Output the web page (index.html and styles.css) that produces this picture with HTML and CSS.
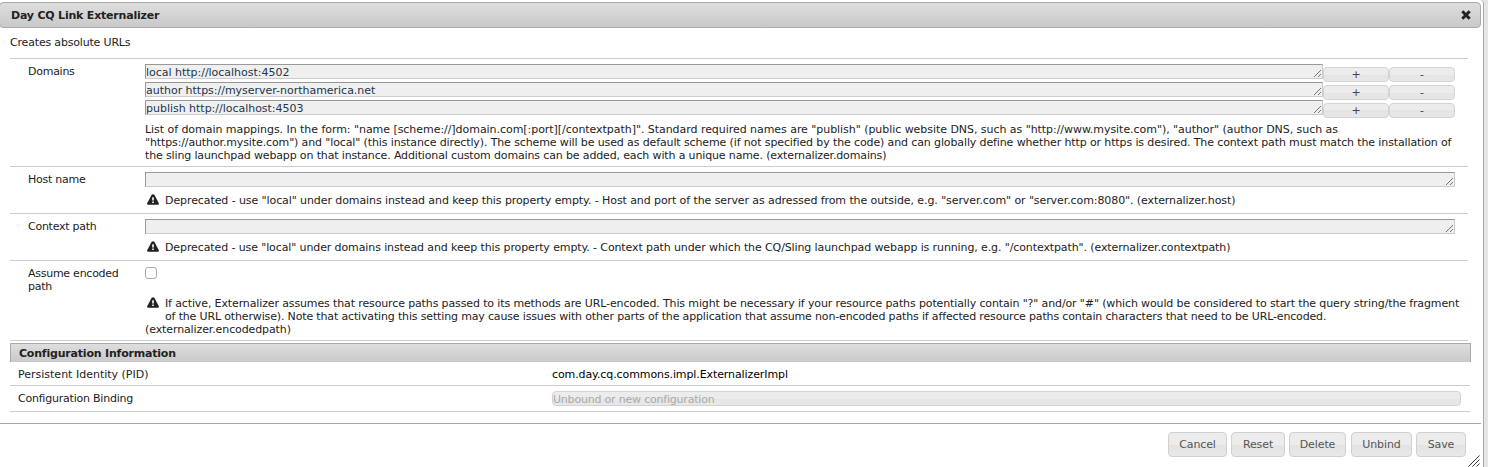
FILE: index.html
```html
<!DOCTYPE html>
<html lang="en">
<head>
<meta charset="utf-8">
<title>Day CQ Link Externalizer</title>
<link rel="stylesheet" href="styles.css">
</head>
<body>
<svg class="defs" width="0" height="0">
  <symbol id="grip" viewBox="0 0 7 7"><path d="M0 7L7 0M4 7L7 4" fill="none" stroke="#555" stroke-width=".8"/></symbol>
  <symbol id="warn" viewBox="0 0 12 11"><path d="M4.5.9Q6 -.6 7.5.9L11.8 9.2Q12.2 10.7 11 10.7H1Q-.2 10.7.2 9.2Z" fill="#222"/><path d="M5.2 3.2h1.6v3.4H5.2zM5.2 7.6h1.6v1.4H5.2z" fill="#fff"/></symbol>
</svg>
<main class="dialog">
  <header class="titlebar">
    <span class="title">Day CQ Link Externalizer</span>
    <svg class="close" width="10" height="10" viewBox="0 0 10 10"><path d="M1.3 1.3L8.7 8.7M8.7 1.3L1.3 8.7" stroke="#222" stroke-width="3" fill="none"/></svg>
  </header>
  <section class="content">
    <p class="intro">Creates absolute URLs</p>
    <div class="row domains">
      <div class="label">Domains</div>
      <div class="value">
        <div class="entry"><div class="field"><span>local http://localhost:4502</span><svg class="grip"><use href="#grip"/></svg></div><button class="mini">+</button><button class="mini">-</button></div>
        <div class="entry"><div class="field"><span>author https://myserver-northamerica.net</span><svg class="grip"><use href="#grip"/></svg></div><button class="mini">+</button><button class="mini">-</button></div>
        <div class="entry"><div class="field"><span>publish http://localhost:4503</span><svg class="grip"><use href="#grip"/></svg></div><button class="mini">+</button><button class="mini">-</button></div>
        <div class="help">
          <span class="line d1">List of domain mappings. In the form: "name [scheme://]domain.com[:port][/contextpath]". Standard required names are "publish" (public website DNS, such as "http://www.mysite.com"), "author" (author DNS, such as</span>
          <span class="line d2">"https://author.mysite.com") and "local" (this instance directly). The scheme will be used as default scheme (if not specified by the code) and can globally define whether http or https is desired. The context path must match the installation of</span>
          <span class="line d3">the sling launchpad webapp on that instance. Additional custom domains can be added, each with a unique name. (externalizer.domains)</span>
        </div>
      </div>
    </div>
    <div class="row single">
      <div class="label">Host name</div>
      <div class="value">
        <div class="field wide"><svg class="grip"><use href="#grip"/></svg></div>
        <div class="note"><svg class="warn"><use href="#warn"/></svg><span class="line h1">Deprecated - use "local" under domains instead and keep this property empty. - Host and port of the server as adressed from the outside, e.g. "server.com" or "server.com:8080". (externalizer.host)</span></div>
      </div>
    </div>
    <div class="row single">
      <div class="label">Context path</div>
      <div class="value">
        <div class="field wide"><svg class="grip"><use href="#grip"/></svg></div>
        <div class="note"><svg class="warn"><use href="#warn"/></svg><span class="line c1">Deprecated - use "local" under domains instead and keep this property empty. - Context path under which the CQ/Sling launchpad webapp is running, e.g. "/contextpath". (externalizer.contextpath)</span></div>
      </div>
    </div>
    <div class="row encoded">
      <div class="label">Assume encoded path</div>
      <div class="value">
        <span class="check"></span>
        <div class="note"><svg class="warn"><use href="#warn"/></svg><div><span class="line e1">If active, Externalizer assumes that resource paths passed to its methods are URL-encoded. This might be necessary if your resource paths potentially contain "?" and/or "#" (which would be considered to start the query string/the fragment</span><span class="line e2">of the URL otherwise). Note that activating this setting may cause issues with other parts of the application that assume non-encoded paths if affected resource paths contain characters that need to be URL-encoded.</span></div></div>
        <span class="line e3">(externalizer.encodedpath)</span>
      </div>
    </div>
    <h2 class="section">Configuration Information</h2>
    <div class="info pid"><span class="key">Persistent Identity (PID)</span><span class="val">com.day.cq.commons.impl.ExternalizerImpl</span></div>
    <div class="info binding"><span class="key">Configuration Binding</span><span class="select">Unbound or new configuration</span></div>
  </section>
  <footer class="footer">
    <button class="btn cancel">Cancel</button>
    <button class="btn reset">Reset</button>
    <button class="btn delete">Delete</button>
    <button class="btn unbind">Unbind</button>
    <button class="btn save">Save</button>
    <svg class="resize" width="12" height="12" viewBox="0 0 12 12"><path d="M.5 11.5L11.5 .5M4.5 11.5L11.5 4.5M8.5 11.5L11.5 8.5" stroke="#333" fill="none"/></svg>
  </footer>
</main>
</body>
</html>
```
FILE: styles.css
```css
* { box-sizing: border-box; }
body { margin: 0; height: 467px; overflow: hidden; background: #e5e5e5; font: 11px/13px Verdana, "DejaVu Sans", sans-serif; color: #222; }
.defs { display: none; }
.dialog { width: 1484px; height: 467px; background: #fff; border-right: 1px solid #aaa; border-top-right-radius: 4px; padding-top: 2px; display: flex; flex-direction: column; }
.titlebar { height: 26px; width: 1482px; margin-left: -1px; padding: 0 9px 0 11px; border: 1px solid #aaa; border-radius: 4px; background: linear-gradient(#dedede, #c9c9c9); display: flex; align-items: center; justify-content: space-between; }
.title { font-weight: bold; letter-spacing: -.2px; }
.content { width: 1471px; padding-left: 10px; height: 395px; }
.intro { margin: 0; height: 30px; padding-top: 8px; letter-spacing: -.18px; }
.row { display: flex; width: 1458px; border-top: 1px solid #ccc; padding: 5px 0 0 18px; }
.label { width: 117px; padding: 1px 12px 0 0; flex: none; letter-spacing: -.26px; }
.value { flex: 1; min-width: 0; }
.domains { height: 108px; }
.single { height: 47px; }
.encoded { height: 81px; border-bottom: 1px solid #ccc; }
.entry { display: flex; height: 18px; }
.field { display: flex; justify-content: space-between; align-items: flex-start; width: 1178px; height: 15px; background: #efefef; border: 1px solid #ccc; border-top-color: #999; border-left-color: #999; line-height: 15px; letter-spacing: -.02px; color: #23364b; }
.wide { width: 1310px; justify-content: flex-end; }
.grip { width: 7px; height: 7px; margin: 5px 1px 0 0; }
.mini { width: 66px; height: 15px; margin-top: 3px; padding: 0; border: 1px solid #d3d3d3; border-radius: 4px; background: linear-gradient(#ececec 50%, #e4e4e4 50%, #e8e8e8); font: 11px/14px Verdana, "DejaVu Sans", sans-serif; color: #444; }
.help { padding-top: 5px; }
.line { display: block; white-space: nowrap; width: max-content; }
.d1 { letter-spacing: -.048px; }
.d2 { letter-spacing: -.122px; }
.d3 { letter-spacing: -.144px; }
.h1 { letter-spacing: -.088px; }
.c1 { letter-spacing: -.11px; }
.e1 { letter-spacing: -.129px; }
.e2 { letter-spacing: -.154px; }
.e3 { letter-spacing: -.11px; }
.note { display: flex; padding-top: 7px; }
.warn { width: 12px; height: 11px; margin: 0 6px 0 2px; flex: none; }
.check { display: block; width: 12px; height: 12px; margin-top: 1px; border: 1px solid #aaa; border-radius: 3px; background: #fff; }
.encoded .note { padding-top: 18px; }
.section { margin: 2px 0 0; height: 19px; width: 1461px; padding-left: 8px; font: bold 11px/19px Verdana, "DejaVu Sans", sans-serif; border: solid #aaa; border-width: 1px 1px 0; background: linear-gradient(#dedede, #c9c9c9); letter-spacing: -.2px; }
.info { display: flex; width: 1460px; border-bottom: 1px solid #ccc; padding-left: 8px; }
.key { width: 534px; }
.pid { height: 24px; padding-top: 6px; }
.binding { height: 26px; padding-top: 5px; }
.binding .key { padding-top: 1px; letter-spacing: -.22px; }
.select { width: 909px; height: 15px; border: 1px solid #d3d3d3; border-radius: 4px; background: linear-gradient(#ececec 50%, #e4e4e4 50%, #e8e8e8); color: #aaa; line-height: 15px; letter-spacing: -.2px; }
.val { color: #000; letter-spacing: -.1px; }
.footer { flex: 1; width: 1481px; border-top: 1px solid #aaa; padding: 8px 0 0 1168px; display: flex; align-items: flex-start; position: relative; }
.btn { height: 25px; margin-right: 4px; padding: 0; border: 1px solid #d0d0d0; border-radius: 4px; background: linear-gradient(#ececec 50%, #e3e3e3 50%, #e8e8e8); font: 11px/20px Verdana, "DejaVu Sans", sans-serif; letter-spacing: -.1px; color: #555; flex: none; }
.cancel { width: 59px; }
.reset { width: 54px; }
.delete { width: 57px; margin-right: 5px; }
.unbind { width: 61px; }
.save { width: 50px; margin-right: 0; }
.resize { position: absolute; right: 1px; bottom: 0; }
```
